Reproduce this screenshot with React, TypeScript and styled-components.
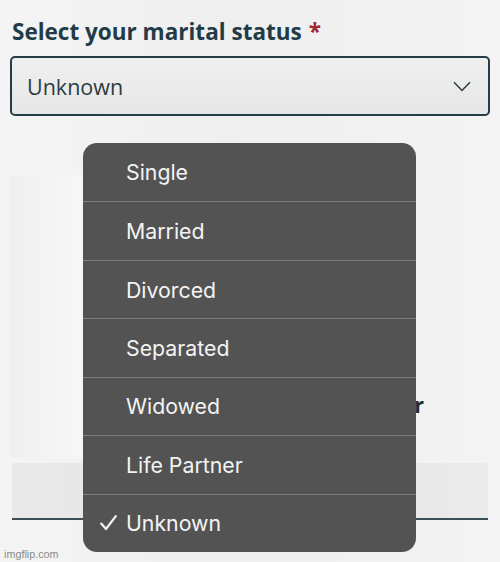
import styled, { createGlobalStyle } from "styled-components";

const GlobalStyle = createGlobalStyle`
  html, body {
    margin: 0;
    padding: 0;
  }
  body {
    background: linear-gradient(90deg, #f4f4f4 0%, #efefef 45%, #f3f3f3 100%);
    font-family: "Open Sans", "Liberation Sans", sans-serif;
  }
`;

const Page = styled.div`
  position: relative;
  width: 500px;
  height: 562px;
  overflow: hidden;
  padding: 17px 10px 0;
  box-sizing: border-box;
`;

const Label = styled.div`
  padding-left: 2px;
  font-size: 22.5px;
  line-height: 30px;
  font-weight: 700;
  color: #223b46;
`;

const Required = styled.span`
  margin-left: 7px;
  color: #a3262c;
`;

const SelectBox = styled.div`
  margin-top: 9px;
  height: 60px;
  box-sizing: border-box;
  border: 2px solid #263c46;
  border-radius: 5px;
  background: linear-gradient(180deg, #efefef 0%, #e7e7e7 100%);
  display: flex;
  align-items: center;
  justify-content: space-between;
  padding: 0 17px 0 15px;
  font-size: 21.5px;
  color: #2a3b42;
`;

const Card = styled.div`
  margin-top: 59px;
  width: 400px;
  height: 283px;
  background: linear-gradient(90deg, #efefef 0%, #f6f6f6 15%, #f8f8f8 100%);
  display: flex;
  flex-direction: column;
  padding: 215px 0 0 72px;
  box-sizing: border-box;
`;

const CardLine = styled.div<{ $gap?: number }>`
  margin-top: ${(p) => p.$gap ?? 0}px;
  font-size: 21.5px;
  line-height: 30px;
  font-weight: 700;
  color: #1d2f37;
  white-space: nowrap;
`;

const Field = styled.div`
  margin: 5px 2px 0;
  height: 57px;
  box-sizing: border-box;
  border-bottom: 2px solid #3a4e57;
  border-radius: 4px 4px 0 0;
  background: linear-gradient(90deg, #e9e9e9 0%, #e4e4e4 50%, #ebebeb 100%);
`;

const Watermark = styled.div`
  position: absolute;
  left: 4px;
  bottom: 2px;
  font-family: "Liberation Sans", Arial, sans-serif;
  font-size: 10.8px;
  color: #8a8a8a;
`;

const Menu = styled.ul`
  position: absolute;
  left: 83px;
  top: 143px;
  width: 333px;
  height: 409px;
  margin: 0;
  padding: 0;
  list-style: none;
  border-radius: 14px;
  background: #535353;
  display: grid;
  grid-template-rows: repeat(7, 1fr);
  overflow: hidden;
`;

const Option = styled.li`
  display: flex;
  align-items: center;
  padding-left: 17px;
  font-family: Inter, "Liberation Sans", sans-serif;
  font-size: 21.3px;
  color: #f3f3f3;

  & + & {
    border-top: 1px solid #7b7b7b;
  }
`;

const Check = styled.span`
  width: 26px;
  display: flex;
  align-items: center;
`;

const options = [
  "Single",
  "Married",
  "Divorced",
  "Separated",
  "Widowed",
  "Life Partner",
  "Unknown",
];

const Chevron = () => (
  <svg width="18" height="11" viewBox="0 0 18 11" fill="none">
    <path d="M1 1.2 L9 9.5 L17 1.2" stroke="#2a3d46" strokeWidth="1.5" />
  </svg>
);

const CheckMark = () => (
  <svg width="17" height="16" viewBox="0 0 17 16" fill="none">
    <path
      d="M1.2 8.6 L6 14 L15.8 1.2"
      stroke="#f3f3f3"
      strokeWidth="2.2"
      strokeLinecap="round"
      strokeLinejoin="round"
    />
  </svg>
);

const App = () => {
  const selected = "Unknown";

  return (
    <Page>
      <GlobalStyle />
      <Label>
        Select your marital status<Required>*</Required>
      </Label>
      <SelectBox>
        <span>{selected}</span>
        <Chevron />
      </SelectBox>

      <Card>
        <CardLine>Information about your partner</CardLine>
        <CardLine $gap={4}>Name</CardLine>
      </Card>
      <Field />

      <Watermark>imgflip.com</Watermark>

      <Menu>
        {options.map((o) => (
          <Option key={o}>
            <Check>{o === selected && <CheckMark />}</Check>
            {o}
          </Option>
        ))}
      </Menu>
    </Page>
  );
};

export default App;
